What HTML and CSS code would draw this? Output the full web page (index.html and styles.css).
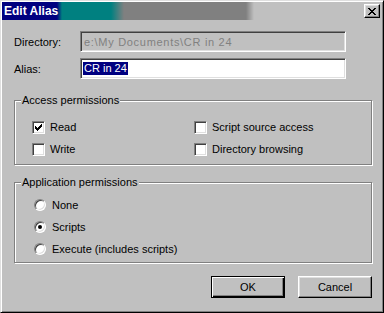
FILE: index.html
```html
<!DOCTYPE html>
<html lang="en">
<head>
    <meta charset="UTF-8">
    <title>Edit Alias</title>
    <link rel="stylesheet" href="styles.css">
</head>
<body>
    <div class="dialog">
        <div class="titlebar">
            <span class="title">Edit Alias</span>
            <button class="close-btn">
                <svg width="8" height="7" viewBox="0 0 8 7" shape-rendering="crispEdges">
                    <path d="M0 0h2v1h-2z M6 0h2v1h-2z M1 1h2v1h-2z M5 1h2v1h-2z M2 2h4v1h-4z M3 3h2v1h-2z M2 4h4v1h-4z M1 5h2v1h-2z M5 5h2v1h-2z M0 6h2v1h-2z M6 6h2v1h-2z" fill="#000"/>
                </svg>
            </button>
        </div>

        <div class="content">
            <!-- Directory / alias fields -->
            <div class="fields">
                <span class="field-label">Directory:</span>
                <div class="textbox disabled">e:\My Documents\CR in 24</div>
                <span class="field-label">Alias:</span>
                <div class="textbox"><span class="selected">CR in 24</span></div>
            </div>

            <!-- Access permissions -->
            <div class="group access">
                <span class="group-label">Access permissions</span>
                <div class="options two-col">
                    <div class="option"><span class="checkbox">
                        <svg width="7" height="7" viewBox="0 0 7 7" shape-rendering="crispEdges">
                            <path d="M6 0h1v1h-1z M5 1h2v1h-2z M0 2h1v1h-1z M4 2h3v1h-3z M0 3h2v1h-2z M3 3h3v1h-3z M0 4h5v1h-5z M1 5h3v1h-3z M2 6h1v1h-1z" fill="#000"/>
                        </svg>
                    </span>Read</div>
                    <div class="option"><span class="checkbox"></span>Script source access</div>
                    <div class="option"><span class="checkbox"></span>Write</div>
                    <div class="option"><span class="checkbox"></span>Directory browsing</div>
                </div>
            </div>

            <!-- Application permissions -->
            <div class="group application">
                <span class="group-label">Application permissions</span>
                <div class="options">
                    <div class="option"><span class="radio"></span>None</div>
                    <div class="option"><span class="radio checked"></span>Scripts</div>
                    <div class="option"><span class="radio"></span>Execute (includes scripts)</div>
                </div>
            </div>

            <div class="buttons">
                <button class="btn default">OK</button>
                <button class="btn">Cancel</button>
            </div>
        </div>
    </div>
</body>
</html>
```

FILE: styles.css
```css
body {
    margin: 0;
    padding: 0;
    background-color: #c0c0c0;
    font-family: "Liberation Sans", Arial, sans-serif;
    font-size: 11px;
    color: #000;
}

.dialog {
    width: 384px;
    height: 313px;
    box-sizing: border-box;
    padding: 1px;
    background-color: #c0c0c0;
    border: 1px solid;
    border-color: #dfdfdf #000 #000 #dfdfdf;
    box-shadow: inset 1px 1px 0 #fff, inset -1px -1px 0 #808080;
}

.titlebar {
    height: 18px;
    display: flex;
    align-items: center;
    justify-content: space-between;
    background: linear-gradient(to right,
        #000080 0px, #000080 55px,
        #008080 60px, #008080 109px,
        #808080 122px, #808080 244px,
        #c0c0c0 252px, #c0c0c0 100%);
}

.title {
    color: #fff;
    font-weight: bold;
    font-size: 12px;
    padding-left: 2px;
    line-height: 14px;
}

.close-btn {
    width: 16px;
    height: 14px;
    margin-right: 2px;
    padding: 0;
    display: flex;
    align-items: center;
    justify-content: center;
    background-color: #c0c0c0;
    border: 1px solid;
    border-color: #fff #000 #000 #fff;
    box-shadow: inset -1px -1px 0 #808080, inset 1px 1px 0 #dfdfdf;
}

.content {
    padding: 11px 10px 0 12px;
}

.fields {
    display: grid;
    grid-template-columns: 66px 266px;
    grid-auto-rows: 21px;
    row-gap: 6px;
    align-items: center;
}

.textbox {
    height: 21px;
    box-sizing: border-box;
    padding: 0 2px;
    display: flex;
    align-items: center;
    background-color: #fff;
    border: 1px solid;
    border-color: #808080 #fff #fff #808080;
    box-shadow: inset 1px 1px 0 #404040, inset -1px -1px 0 #dfdfdf;
    white-space: nowrap;
}

.textbox.disabled {
    background-color: #c0c0c0;
    color: #808080;
    padding-left: 3px;
    letter-spacing: 0.7px;
}

.selected {
    background-color: #000080;
    color: #fff;
    line-height: 13px;
    padding: 0 1px;
}

.group {
    position: relative;
    border: 1px solid #808080;
    box-shadow: inset 1px 1px 0 #fff, 1px 1px 0 #fff;
}

.group-label {
    position: absolute;
    top: -7px;
    left: 6px;
    padding: 0 1px;
    line-height: 13px;
    background-color: #c0c0c0;
}

.access {
    margin-top: 21px;
    padding: 17px 0 6px 17px;
}

.application {
    margin-top: 17px;
    padding: 13px 0 4px 19px;
}

.options {
    display: grid;
    grid-auto-rows: 18px;
    row-gap: 4px;
}

.options.two-col {
    grid-template-columns: 162px 1fr;
}

.option {
    display: flex;
    align-items: center;
    gap: 5px;
    white-space: nowrap;
}

.checkbox {
    width: 13px;
    height: 13px;
    box-sizing: border-box;
    display: flex;
    align-items: center;
    justify-content: center;
    background-color: #fff;
    border: 1px solid;
    border-color: #808080 #fff #fff #808080;
    box-shadow: inset 1px 1px 0 #404040, inset -1px -1px 0 #dfdfdf;
}

.radio {
    width: 12px;
    height: 12px;
    box-sizing: border-box;
    border-radius: 50%;
    display: flex;
    align-items: center;
    justify-content: center;
    background-color: #fff;
    border: 1px solid;
    border-color: #808080 #fff #fff #808080;
    box-shadow: inset 1px 1px 0 #404040, inset -1px -1px 0 #dfdfdf;
    margin-right: 1px;
}

.radio.checked::after {
    content: "";
    width: 4px;
    height: 4px;
    border-radius: 50%;
    background-color: #000;
}

.buttons {
    display: flex;
    justify-content: flex-end;
    gap: 13px;
    margin-top: 13px;
}

.btn {
    width: 74px;
    height: 22px;
    padding: 0;
    font-family: "Liberation Sans", Arial, sans-serif;
    font-size: 11px;
    color: #000;
    background-color: #c0c0c0;
    border: 1px solid;
    border-color: #fff #000 #000 #fff;
    box-shadow: inset -1px -1px 0 #808080, inset 1px 1px 0 #dfdfdf;
}

.btn.default {
    border-color: #000;
    box-shadow: inset 1px 1px 0 #fff, inset -1px -1px 0 #000, inset -2px -2px 0 #808080;
}
```
